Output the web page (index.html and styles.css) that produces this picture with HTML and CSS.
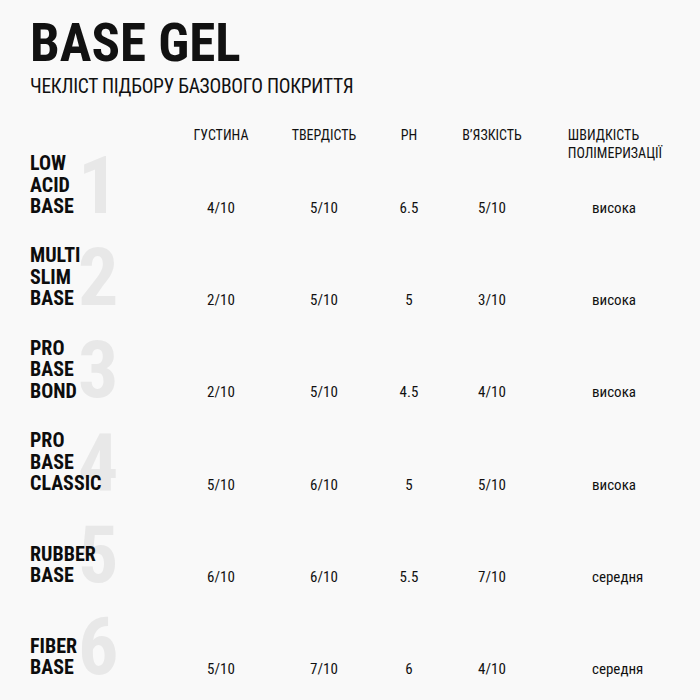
FILE: index.html
```html
<!DOCTYPE html>
<html lang="uk">
<head>
<meta charset="utf-8">
<title>BASE GEL</title>
<link rel="stylesheet" href="styles.css">
</head>
<body>
<main class="page">
  <h1 class="title">BASE GEL</h1>
  <p class="subtitle">ЧЕКЛІСТ ПІДБОРУ БАЗОВОГО ПОКРИТТЯ</p>

  <div class="table">
    <div class="head">
      <div class="cell"></div>
      <div class="cell">ГУСТИНА</div>
      <div class="cell">ТВЕРДІСТЬ</div>
      <div class="cell">PH</div>
      <div class="cell">В’ЯЗКІСТЬ</div>
      <div class="cell"><span class="multi">ШВИДКІСТЬ<br>ПОЛІМЕРИЗАЦІЇ</span></div>
    </div>

    <div class="row">
      <div class="label"><span class="num">1</span><span class="name">LOW<br>ACID<br>BASE</span></div>
      <div class="cell">4/10</div><div class="cell">5/10</div><div class="cell">6.5</div><div class="cell">5/10</div><div class="cell speed">висока</div>
    </div>
    <div class="row">
      <div class="label"><span class="num">2</span><span class="name">MULTI<br>SLIM<br>BASE</span></div>
      <div class="cell">2/10</div><div class="cell">5/10</div><div class="cell">5</div><div class="cell">3/10</div><div class="cell speed">висока</div>
    </div>
    <div class="row">
      <div class="label"><span class="num">3</span><span class="name">PRO<br>BASE<br>BOND</span></div>
      <div class="cell">2/10</div><div class="cell">5/10</div><div class="cell">4.5</div><div class="cell">4/10</div><div class="cell speed">висока</div>
    </div>
    <div class="row">
      <div class="label"><span class="num">4</span><span class="name">PRO<br>BASE<br>CLASSIC</span></div>
      <div class="cell">5/10</div><div class="cell">6/10</div><div class="cell">5</div><div class="cell">5/10</div><div class="cell speed">висока</div>
    </div>
    <div class="row">
      <div class="label"><span class="num">5</span><span class="name">RUBBER<br>BASE</span></div>
      <div class="cell">6/10</div><div class="cell">6/10</div><div class="cell">5.5</div><div class="cell">7/10</div><div class="cell speed">середня</div>
    </div>
    <div class="row">
      <div class="label"><span class="num">6</span><span class="name">FIBER<br>BASE</span></div>
      <div class="cell">5/10</div><div class="cell">7/10</div><div class="cell">6</div><div class="cell">4/10</div><div class="cell speed">середня</div>
    </div>
  </div>
</main>
</body>
</html>
```

FILE: styles.css
```css
* { box-sizing: border-box; }
html, body {
  margin: 0;
  padding: 0;
  background: #f9f9f9;
}
body {
  font-family: "Roboto Condensed", "Liberation Sans Narrow", "Arial Narrow", "Liberation Sans", sans-serif;
  color: #111;
}
.page {
  padding: 17px 0 0 30px;
  width: 700px;
  height: 700px;
  overflow: hidden;
}
.title {
  margin: 0;
  font-size: 53px;
  line-height: 53px;
  font-weight: 700;
  letter-spacing: 0;
}
.subtitle {
  margin: 5px 0 0;
  font-size: 19.5px;
  line-height: 24px;
  font-weight: 400;
  letter-spacing: -0.28px;
}
.table {
  margin-top: 27px;
  display: flex;
  flex-direction: column;
  gap: 28.4px;
}
.head, .row {
  display: grid;
  grid-template-columns: 150px 82px 124px 46px 120px 126px;
}
.head {
  height: 27px;
  margin-bottom: -28.4px;
  font-size: 14px;
  line-height: 18px;
  align-items: start;
}
.head .cell {
  text-align: center;
  white-space: nowrap;
}
.multi {
  display: inline-block;
  text-align: left;
}
.row {
  height: 64px;
  align-items: end;
  font-size: 15px;
  line-height: 20px;
}
.row .cell {
  text-align: center;
}
.row .speed {
  text-align: left;
  padding-left: 40px;
}
.label {
  display: grid;
  align-items: end;
}
.num, .name {
  grid-area: 1 / 1;
}
.num {
  margin-left: 48px;
  font-size: 80px;
  line-height: 64px;
  font-weight: 700;
  color: #e8e8e8;
}
.name {
  position: relative;
  font-size: 20px;
  line-height: 21.5px;
  font-weight: 700;
  color: #0d0d0d;
}
```
